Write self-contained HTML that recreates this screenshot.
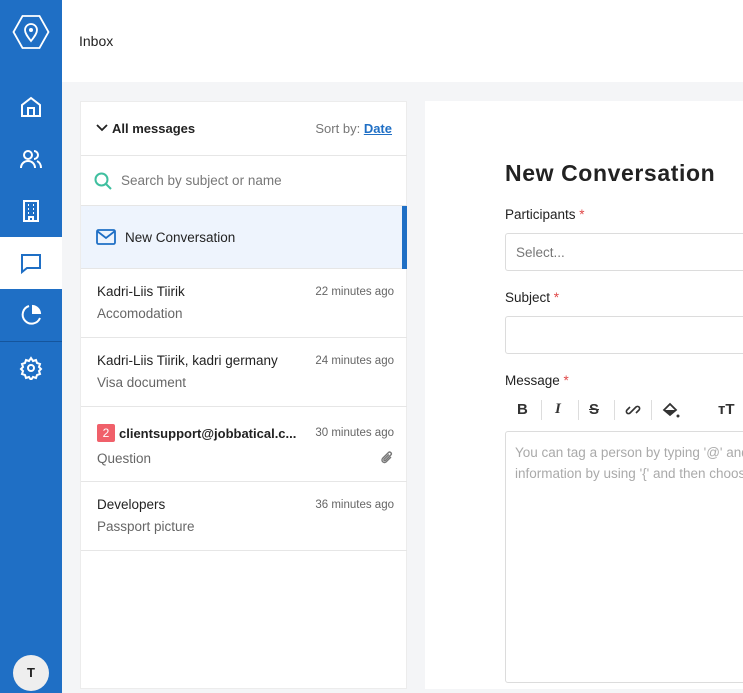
<!DOCTYPE html><html><head><style>
*{box-sizing:border-box;margin:0;padding:0}
body{width:743px;height:693px;overflow:hidden;background:#f4f5f7;font-family:"Liberation Sans",sans-serif;position:relative;color:#222}
.side{position:absolute;left:0;top:0;width:62px;height:693px;background:#1f6fc5}
.side .it{position:absolute;left:0;width:62px;height:52px;display:flex;align-items:center;justify-content:center}
.hdr{position:absolute;left:62px;top:0;right:0;height:82px;background:#fff;font-size:14px;padding:33px 0 0 17px}
.list{position:absolute;left:80px;top:101px;width:327px;height:588px;background:#fff;border:1px solid #ececec}
.row{position:absolute;left:0;width:326px;border-bottom:1px solid #e6e6e6}
.nm{position:absolute;left:16px;font-size:13.5px;color:#222}
.sb{position:absolute;left:16px;font-size:13.5px;color:#666}
.tm{position:absolute;right:13px;font-size:11.5px;color:#666}
.right{position:absolute;left:425px;top:101px;width:330px;height:588px;background:#fff}
.lbl{position:absolute;left:80px;font-size:13.5px;color:#222}
.lbl b{color:#e04848;font-weight:normal}
.inp{position:absolute;left:80px;width:300px;border:1px solid #dcdcdc;border-radius:3px}
</style></head><body>
<div class="side">
<div class="it" style="top:6px;height:52px"><svg width="38" height="36" viewBox="0 0 38 36"><path d="M10.5 2h17l9 16-9 16h-17l-9-16z" fill="none" stroke="#fff" stroke-width="1.8"/><path d="M19 27c-4-5-6-8-6-11a6 6 0 0112 0c0 3-2 6-6 11z" fill="none" stroke="#fff" stroke-width="1.8"/><circle cx="19" cy="16" r="2" fill="#fff"/></svg></div>
<div class="it" style="top:81px"><svg width="24" height="24" viewBox="0 0 24 24" fill="none" stroke="#fff" stroke-width="2"><path d="M3 10l9-7 9 7v11H3z"/><path d="M9 21v-8h6v8"/></svg></div>
<div class="it" style="top:133px"><svg width="24" height="24" viewBox="0 0 24 24" fill="none" stroke="#fff" stroke-width="2"><circle cx="9" cy="8" r="4"/><path d="M2 21c0-4 3-7 7-7s7 3 7 7M15 4a4 4 0 010 8M18 14c2 1 4 3 4 7"/></svg></div>
<div class="it" style="top:185px"><svg width="24" height="24" viewBox="0 0 24 24" fill="none" stroke="#fff" stroke-width="2"><path d="M5 2h14v20H5zM10 22v-4h4v4"/><path d="M9 6h1M14 6h1M9 10h1M14 10h1M9 14h1M14 14h1"/></svg></div>
<div class="it" style="top:237px;background:#fff"><svg width="24" height="24" viewBox="0 0 24 24" fill="none" stroke="#1f6fc5" stroke-width="2"><path d="M3 4h18v13H8l-5 4z"/></svg></div>
<div class="it" style="top:289px"><svg width="24" height="24" viewBox="0 0 24 24" fill="none" stroke="#fff" stroke-width="2"><path d="M21 15A9 9 0 1110 3"/><path d="M14 3a8 8 0 017 7h-7z" fill="#fff"/></svg></div>
<div style="position:absolute;top:341px;left:0;width:62px;height:1px;background:#15559c"></div>
<div class="it" style="top:342px"><svg width="24" height="24" viewBox="0 0 24 24" fill="none" stroke="#fff" stroke-width="2"><circle cx="12" cy="12" r="3"/><path d="M12 2l2 3 3-1 1 3 3 1-1 3 2 2-2 2 1 3-3 1-1 3-3-1-2 3-2-3-3 1-1-3-3-1 1-3-2-2 2-2-1-3 3-1 1-3 3 1z"/></svg></div>
<div style="position:absolute;left:13px;top:655px;width:36px;height:36px;border-radius:50%;background:#eee;font-size:13px;font-weight:bold;text-align:center;line-height:36px">T</div>
</div>
<div class="hdr">Inbox</div>
<div class="list">
<div class="row" style="top:0;height:54px"><svg style="position:absolute;left:15px;top:21px" width="12" height="10" viewBox="0 0 12 10"><path d="M1 2l5 5 5-5" fill="none" stroke="#222" stroke-width="1.8"/></svg><span style="position:absolute;left:31px;top:19px;font-size:13px;font-weight:bold">All messages</span><span style="position:absolute;right:15px;top:19px;font-size:13px;color:#777">Sort by: <b style="color:#1f6fc5;text-decoration:underline">Date</b></span></div>
<div class="row" style="top:54px;height:50px"><svg style="position:absolute;left:13px;top:16px" width="18" height="18" viewBox="0 0 18 18" fill="none" stroke="#3fbf9f" stroke-width="2"><circle cx="7.5" cy="7.5" r="6"/><path d="M12 12l5 5"/></svg><span style="position:absolute;left:40px;top:17px;font-size:13.5px;color:#777">Search by subject or name</span></div>
<div class="row" style="top:104px;height:63px;background:#eef4fd"><svg style="position:absolute;left:15px;top:23px" width="20" height="16" viewBox="0 0 20 16" fill="none" stroke="#1f6fc5" stroke-width="1.8"><rect x="1" y="1" width="18" height="14" rx="1.5"/><path d="M1 2l9 7 9-7"/></svg><span class="nm" style="left:44px;top:24px">New Conversation</span><div style="position:absolute;right:0;top:0;width:5px;height:63px;background:#1f6fc5"></div></div>
<div class="row" style="top:167px;height:69px"><span class="nm" style="top:15px">Kadri-Liis Tiirik</span><span class="tm" style="top:17px">22 minutes ago</span><span class="sb" style="top:37px">Accomodation</span></div>
<div class="row" style="top:236px;height:69px"><span class="nm" style="top:15px">Kadri-Liis Tiirik, kadri germany</span><span class="tm" style="top:17px">24 minutes ago</span><span class="sb" style="top:37px">Visa document</span></div>
<div class="row" style="top:305px;height:75px"><span style="position:absolute;left:16px;top:17px;width:18px;height:18px;background:#f0606a;color:#fff;font-size:12px;text-align:center;line-height:18px;border-radius:2px">2</span><span class="nm" style="left:38px;top:19px;font-weight:bold;font-size:13px">clientsupport@jobbatical.c...</span><span class="tm" style="top:20px">30 minutes ago</span><span class="sb" style="top:44px">Question</span><svg style="position:absolute;right:13px;top:43px" width="14" height="16" viewBox="0 0 14 16" fill="none" stroke="#777" stroke-width="1.4"><path d="M11 7l-5 5a2.5 2.5 0 01-3.5-3.5l6-6a1.7 1.7 0 012.4 2.4l-5.6 5.6a.8.8 0 01-1.2-1.2l4.8-4.8"/></svg></div>
<div class="row" style="top:380px;height:69px"><span class="nm" style="top:15px">Developers</span><span class="tm" style="top:17px">36 minutes ago</span><span class="sb" style="top:37px">Passport picture</span></div>
</div>
<div class="right">
<div style="position:absolute;left:80px;top:59px;font-size:23px;font-weight:bold;letter-spacing:0.6px;color:#222">New Conversation</div>
<div class="lbl" style="top:106px">Participants <b>*</b></div>
<div class="inp" style="top:132px;height:38px;font-size:13.5px;color:#777;padding:11px 10px">Select...</div>
<div class="lbl" style="top:189px">Subject <b>*</b></div>
<div class="inp" style="top:215px;height:38px"></div>
<div class="lbl" style="top:272px">Message <b>*</b></div>
<div style="position:absolute;left:92px;top:300px;font-size:15px;font-weight:bold;color:#333">B</div>
<div style="position:absolute;left:116px;top:299px;width:1px;height:20px;background:#ddd"></div>
<div style="position:absolute;left:130px;top:300px;font-size:15px;font-style:italic;font-weight:bold;color:#333;font-family:'Liberation Serif',serif">I</div>
<div style="position:absolute;left:153px;top:299px;width:1px;height:20px;background:#ddd"></div>
<div style="position:absolute;left:164px;top:300px;font-size:15px;font-weight:bold;color:#333;text-decoration:line-through">S</div>
<div style="position:absolute;left:189px;top:299px;width:1px;height:20px;background:#ddd"></div>
<div style="position:absolute;left:200px;top:301px"><svg width="16" height="16" viewBox="0 0 16 16" fill="none" stroke="#333" stroke-width="1.6"><path d="M7 9l-2 2a2 2 0 01-3-3l3-3M9 7l2-2a2 2 0 013 3l-3 3M6 10l4-4"/></svg></div>
<div style="position:absolute;left:226px;top:299px;width:1px;height:20px;background:#ddd"></div>
<div style="position:absolute;left:237px;top:301px"><svg width="18" height="16" viewBox="0 0 18 16"><path d="M2 8l6-6 6 6-6 5z" fill="none" stroke="#333" stroke-width="1.8"/><path d="M3 8h10l-5 5z" fill="#333"/><circle cx="16" cy="14" r="1.5" fill="#333"/></svg></div>
<div style="position:absolute;left:293px;top:300px;font-size:15px;font-weight:bold;color:#333">тT</div>
<div class="inp" style="top:330px;height:252px;font-size:13.5px;color:#aaa;padding:10px 9px;line-height:21px;white-space:nowrap;overflow:hidden">You can tag a person by typing '@' and<br>information by using '{' and then choose</div>
</div>
</body></html>
